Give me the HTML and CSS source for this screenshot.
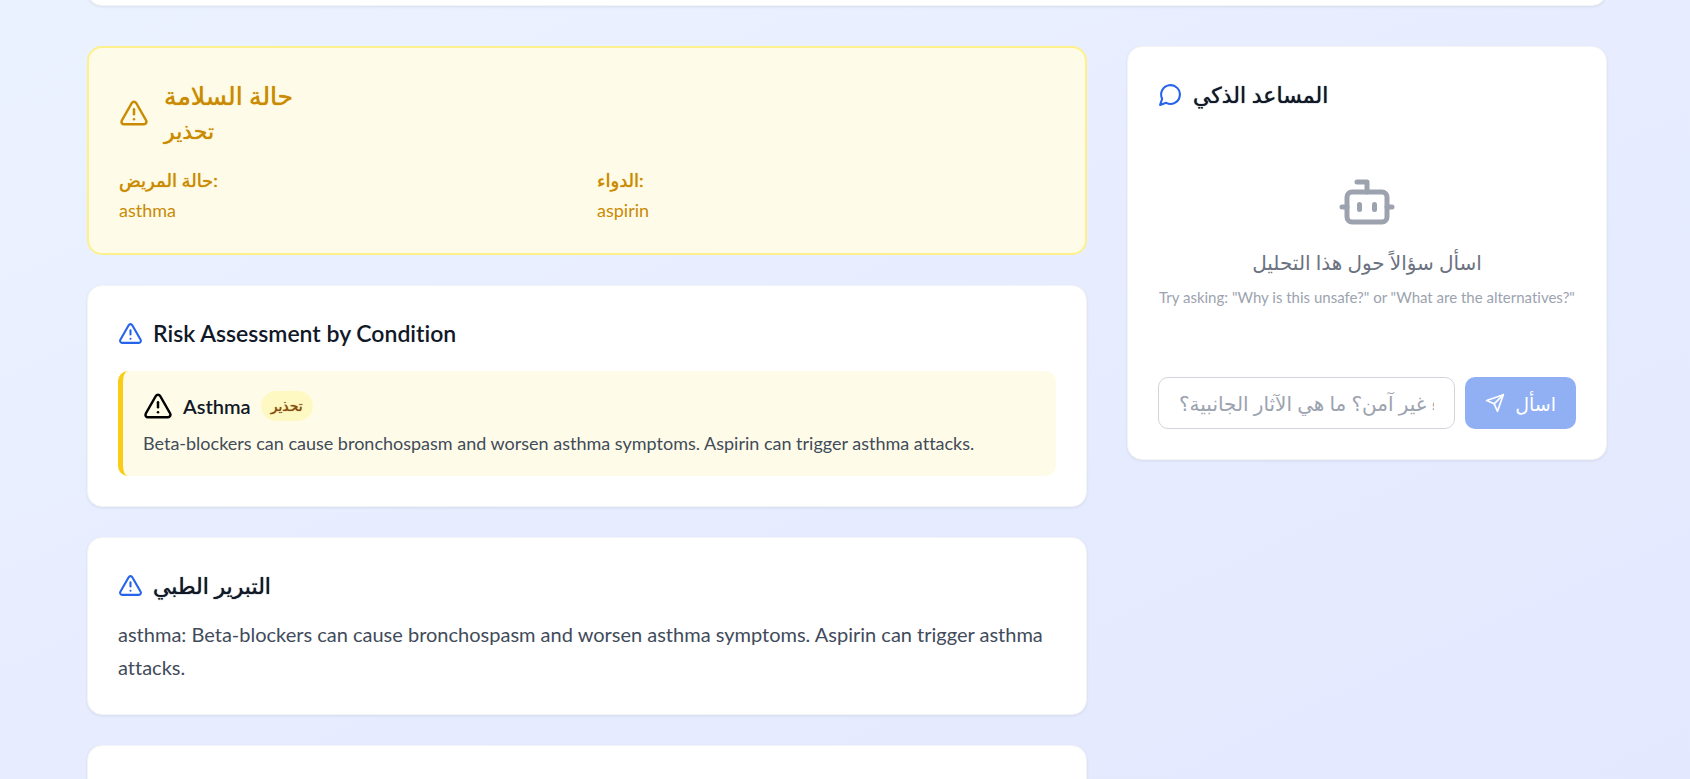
FILE: index.html
```html
<!DOCTYPE html>
<html lang="en">

<head>
    <meta charset="UTF-8">
    <meta name="viewport" content="width=device-width, initial-scale=1.0">
    <title>حالة السلامة</title>
    <link rel="stylesheet" href="styles.css">
</head>

<body>
    <svg class="sprite" aria-hidden="true">
        <symbol id="warning" viewBox="0 0 24 24">
            <path d="m21.73 18-8-14a2 2 0 0 0-3.48 0l-8 14A2 2 0 0 0 4 21h16a2 2 0 0 0 1.73-3" />
            <path d="M12 9v4" />
            <path d="M12 17h.01" />
        </symbol>
    </svg>

    <div class="page">
        <div class="card card-top"></div>

        <div class="layout">
            <main class="results">
                <section class="card safety">
                    <div class="safety-header">
                        <svg class="icon icon-lg"><use href="#warning" /></svg>
                        <div>
                            <h2 class="arabic">حالة السلامة</h2>
                            <p class="status arabic">تحذير</p>
                        </div>
                    </div>
                    <div class="facts">
                        <div>
                            <p class="label arabic">حالة المريض:</p>
                            <p>asthma</p>
                        </div>
                        <div>
                            <p class="label arabic">الدواء:</p>
                            <p>aspirin</p>
                        </div>
                    </div>
                </section>

                <section class="card">
                    <h3 class="card-title">
                        <svg class="icon"><use href="#warning" /></svg>
                        Risk Assessment by Condition
                    </h3>
                    <div class="risk">
                        <div class="risk-header">
                            <svg class="icon icon-lg"><use href="#warning" /></svg>
                            <h4>Asthma</h4>
                            <span class="badge arabic">تحذير</span>
                        </div>
                        <p>Beta-blockers can cause bronchospasm and worsen asthma symptoms. Aspirin can trigger asthma attacks.</p>
                    </div>
                </section>

                <section class="card">
                    <h3 class="card-title title-close arabic">
                        <svg class="icon"><use href="#warning" /></svg>
                        التبرير الطبي
                    </h3>
                    <p class="reasoning">asthma: Beta-blockers can cause bronchospasm and worsen asthma symptoms. Aspirin can trigger asthma attacks.</p>
                </section>

                <section class="card card-next"></section>
            </main>

            <aside class="card assistant">
                <h3 class="card-title arabic">
                    <svg class="icon" viewBox="0 0 24 24">
                        <path d="M7.9 20A9 9 0 1 0 4 16.1L2 22Z" />
                    </svg>
                    المساعد الذكي
                </h3>
                <div class="empty">
                    <svg class="icon icon-bot" viewBox="0 0 24 24">
                        <path d="M12 8V4H8" />
                        <rect width="16" height="12" x="4" y="8" rx="2" />
                        <path d="M2 14h2" />
                        <path d="M20 14h2" />
                        <path d="M15 13v2" />
                        <path d="M9 13v2" />
                    </svg>
                    <p class="empty-text">اسأل سؤالاً حول هذا التحليل</p>
                    <p class="hint">Try asking: "Why is this unsafe?" or "What are the alternatives?"</p>
                </div>
                <form class="ask">
                    <input type="text" aria-label="اسأل سؤالاً" placeholder="لماذا هذا الدواء غير آمن؟ ما هي الآثار الجانبية؟">
                    <button type="submit" disabled>
                        <svg class="icon icon-sm" viewBox="0 0 24 24">
                            <path d="m22 2-7 20-4-9-9-4Z" />
                            <path d="M22 2 11 13" />
                        </svg>
                        اسأل
                    </button>
                </form>
            </aside>
        </div>
    </div>
</body>

</html>
```

FILE: styles.css
```css
* {
    margin: 0;
    padding: 0;
    box-sizing: border-box;
}

body {
    font-family: Lato, "DejaVu Sans", sans-serif;
    font-variant-ligatures: no-common-ligatures;
    font-size: 18px;
    line-height: 25px;
    color: #414b5a;
}

.sprite {
    display: none;
}

.page {
    height: 100vh;
    overflow: hidden;
    padding: 0 83px 0 87px;
    background: linear-gradient(to bottom right, #ebf2ff, #e3e8ff);
}

.card {
    padding: 30px;
    background-color: white;
    border: 1px solid #f3f4f6;
    border-radius: 15px;
    box-shadow: 0 1px 3px rgba(0, 0, 0, 0.08);
}

.card-top {
    height: 30px;
    padding: 0;
    margin-top: -24px;
    margin-bottom: 40px;
}

.card-next {
    height: 200px;
}

.layout {
    display: grid;
    grid-template-columns: repeat(3, minmax(0, 1fr));
    gap: 40px;
    align-items: start;
}

.results {
    grid-column: span 2;
    display: flex;
    flex-direction: column;
    gap: 30px;
}

.icon {
    flex-shrink: 0;
    width: 25px;
    height: 25px;
    fill: none;
    stroke: currentColor;
    stroke-width: 2;
    stroke-linecap: round;
    stroke-linejoin: round;
}

.icon-sm {
    width: 20px;
    height: 20px;
}

.icon-lg {
    width: 30px;
    height: 30px;
}

.icon-bot {
    width: 60px;
    height: 60px;
    color: #9ca3af;
}

.card-title {
    display: flex;
    align-items: center;
    gap: 10px;
    margin-bottom: 20px;
    font-size: 23px;
    font-weight: 600;
    line-height: 35px;
    color: #111827;
}

.card-title.arabic {
    font-size: 22px;
}

.card-title .icon {
    color: #2563eb;
}

.title-close {
    margin-bottom: 15px;
}

/* safety status */
.safety {
    background-color: #fefce8;
    border: 2px solid #fef08a;
    box-shadow: none;
    color: #ca8a04;
}

.safety-header {
    display: flex;
    align-items: center;
    gap: 15px;
    margin-bottom: 20px;
}

.safety h2 {
    font-size: 25px;
    line-height: 35px;
}

.status {
    font-size: 22px;
    line-height: 35px;
}

.facts {
    display: grid;
    grid-template-columns: 1fr 1fr;
    gap: 20px;
}

.label {
    margin-bottom: 5px;
}

/* risk by condition */
.risk {
    padding: 20px;
    background-color: #fefce8;
    border-left: 5px solid #facc15;
    border-radius: 10px;
}

.risk-header {
    display: flex;
    align-items: center;
    gap: 10px;
    margin-bottom: 10px;
    color: #111827;
}

.risk-header .icon {
    color: black;
}

.risk h4 {
    font-size: 20px;
    font-weight: 600;
}

.badge {
    padding: 5px 10px;
    border-radius: 15px;
    background-color: #fef9c3;
    color: #854d0e;
    font-size: 14px;
    line-height: 20px;
}

.reasoning {
    font-size: 20px;
    line-height: 33px;
}

/* assistant */
.empty {
    display: flex;
    flex-direction: column;
    align-items: center;
    padding: 40px 0;
    margin-bottom: 30px;
    text-align: center;
}

.empty-text {
    margin: 15px 0 10px;
    font-size: 20px;
    line-height: 30px;
    color: #6b7280;
}

.hint {
    font-size: 15px;
    line-height: 20px;
    color: #9ca3af;
    white-space: nowrap;
}

.ask {
    display: flex;
    gap: 10px;
}

.ask input {
    flex: 1;
    min-width: 0;
    height: 52px;
    padding: 0 20px;
    border: 1px solid #d1d5db;
    border-radius: 10px;
    font-family: inherit;
    font-size: 20px;
}

.ask input::placeholder {
    color: #9ca3af;
}

.ask button {
    display: flex;
    align-items: center;
    gap: 10px;
    padding: 0 20px;
    border: none;
    border-radius: 10px;
    background-color: #2563eb;
    color: white;
    font-family: inherit;
    font-size: 19px;
    opacity: 0.5;
}

/* the bold Arabic face is too wide, so thicken the regular one */
.arabic {
    font-weight: 400;
    text-shadow: 0 0 1px currentColor;
}
```
